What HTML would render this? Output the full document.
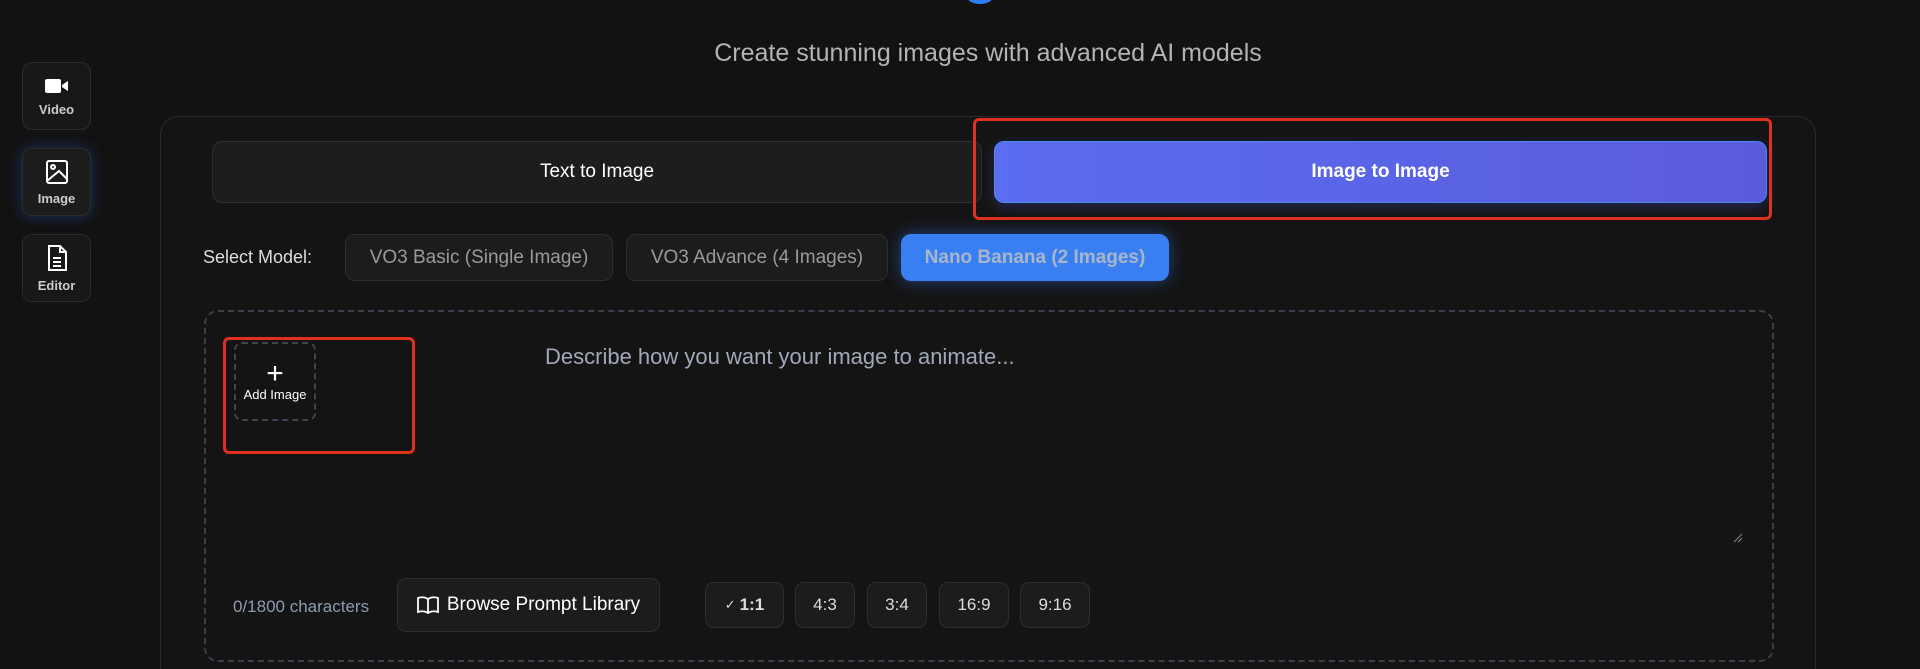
<!DOCTYPE html>
<html><head><meta charset="utf-8"><style>
*{box-sizing:border-box;margin:0;padding:0}
html,body{width:1920px;height:669px;overflow:hidden}
body{background:#121212;font-family:"Liberation Sans",sans-serif;position:relative;color:#fff}
.a{position:absolute}
.side{left:22px;width:69px;height:68px;border:1px solid #2c2c2c;border-radius:10px;background:#181818;display:flex;flex-direction:column;align-items:center;justify-content:center;font-size:13px;font-weight:bold;color:#ccc;gap:6px}
.tab{top:141px;height:62px;border-radius:10px;display:flex;align-items:center;justify-content:center;font-size:19px}
.mb{top:234px;height:47px;border-radius:10px;border:1px solid #2e2e2e;background:#1c1c1c;color:#9a9a9a;font-size:19px;display:flex;align-items:center;justify-content:center}
.rb{top:582px;height:46px;border-radius:9px;border:1px solid #2e2e2e;background:#1c1c1c;color:#ddd;font-size:17px;display:flex;align-items:center;justify-content:center}
</style></head><body>
<div class="a" style="left:966px;top:-14px;width:28px;height:18px;border-radius:50%;background:#2f7cf6"></div>
<div class="a" style="left:0;top:39px;width:1976px;text-align:center;font-size:25px;color:#b3b3b3">Create stunning images with advanced AI models</div>

<div class="a side" style="top:62px"><svg width="26" height="20" viewBox="0 0 26 20"><rect x="1" y="3" width="16" height="14" rx="2" fill="#fff"/><path d="M18 9l6-4v10l-6-4z" fill="#fff"/></svg>Video</div>
<div class="a side" style="top:148px;box-shadow:0 0 14px rgba(40,90,200,.45);background:#1c1c1c"><svg width="24" height="26" viewBox="0 0 24 26" fill="none" stroke="#fff" stroke-width="2"><rect x="2" y="2" width="20" height="22" rx="2"/><circle cx="8" cy="8" r="2"/><path d="M2 22l12-10 8 8"/></svg>Image</div>
<div class="a side" style="top:234px"><svg width="22" height="28" viewBox="0 0 22 28" fill="none" stroke="#fff" stroke-width="2"><path d="M3 2h11l6 6v18H3z"/><path d="M14 2v6h6M7 14h8M7 18h8M7 22h8"/></svg>Editor</div>

<div class="a" style="left:160px;top:116px;width:1656px;height:553px;border:1px solid #2a2a2a;border-bottom:none;border-radius:18px 18px 0 0;background:#141414"></div>
<div class="a tab" style="left:212px;width:770px;background:#1d1d1d;border:1px solid #2e2e2e;color:#fff">Text to Image</div>
<div class="a tab" style="left:994px;width:773px;background:linear-gradient(90deg,#5b6df0,#5a5bdc);border:1px solid #4a8af0;font-weight:bold;box-shadow:0 4px 14px rgba(80,90,230,.3)">Image to Image</div>
<div class="a" style="left:973px;top:118px;width:799px;height:102px;border:3px solid #e0311f;border-radius:6px"></div>

<div class="a" style="left:203px;top:247px;font-size:18px;color:#ddd">Select Model:</div>
<div class="a mb" style="left:345px;width:268px">VO3 Basic (Single Image)</div>
<div class="a mb" style="left:626px;width:262px">VO3 Advance (4 Images)</div>
<div class="a mb" style="left:901px;width:268px;background:#3a7ff2;border-color:#3a7ff2;color:#a9b6c9;font-weight:bold;box-shadow:0 0 16px rgba(50,120,240,.5)">Nano Banana (2 Images)</div>

<div class="a" style="left:204px;top:310px;width:1570px;height:352px;border:2px dashed #3a3f4c;border-radius:14px"></div>
<div class="a" style="left:234px;top:342px;width:82px;height:79px;border:2px dashed #3f4450;border-radius:8px;display:flex;flex-direction:column;align-items:center;justify-content:center;font-size:13px;color:#fff"><span style="font-size:30px;line-height:26px;font-weight:300">+</span>Add Image</div>
<div class="a" style="left:223px;top:337px;width:192px;height:117px;border:3px solid #e0311f;border-radius:6px"></div>
<div class="a" style="left:545px;top:344px;font-size:22px;color:#a1a8b8">Describe how you want your image to animate...</div>
<svg class="a" style="left:1733px;top:533px" width="10" height="10"><path d="M1 9L9 1M5 9L9 5" stroke="#888" stroke-width="1"/></svg>

<div class="a" style="left:233px;top:597px;font-size:17px;color:#8d9bb0">0/1800 characters</div>
<div class="a" style="left:397px;top:578px;width:263px;height:54px;border:1px solid #2e2e2e;border-radius:9px;background:#1c1c1c;display:flex;align-items:center;justify-content:center;gap:8px;font-size:19px;color:#fff"><svg width="22" height="20" viewBox="0 0 22 20" fill="none" stroke="#fff" stroke-width="1.8"><path d="M11 4C8 2 4 2 1 3v14c3-1 7-1 10 1 3-2 7-2 10-1V3c-3-1-7-1-10 1zM11 4v14"/></svg>Browse Prompt Library</div>
<div class="a rb" style="left:705px;width:79px;font-weight:bold"><span style="font-size:13px;font-weight:normal;margin-right:4px">✓</span>1:1</div>
<div class="a rb" style="left:795px;width:60px">4:3</div>
<div class="a rb" style="left:867px;width:60px">3:4</div>
<div class="a rb" style="left:939px;width:70px">16:9</div>
<div class="a rb" style="left:1020px;width:70px">9:16</div>
</body></html>
